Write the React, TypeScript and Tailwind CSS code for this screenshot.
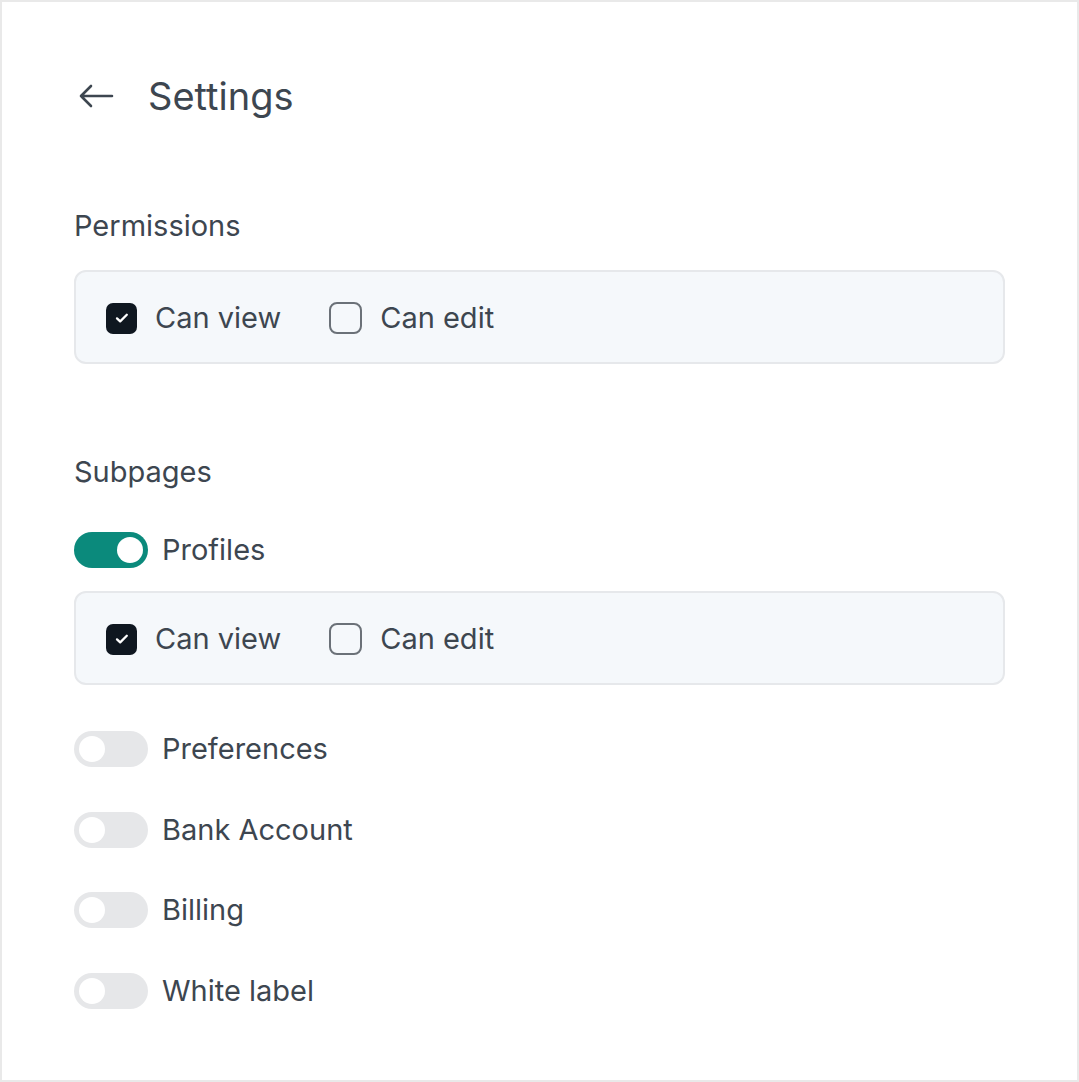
import { useState } from 'react';

type Perm = { view: boolean; edit: boolean };

function ArrowLeft() {
  return (
    <svg width="36" height="24" viewBox="0 0 36 24" fill="none" className="text-[#3d4650]">
      <path d="M34 12H3M13 2L3 12l10 10" stroke="currentColor" strokeWidth="2.6" strokeLinecap="round" strokeLinejoin="round" />
    </svg>
  );
}

function Checkbox({ checked, label, onChange }: { checked: boolean; label: string; onChange: () => void }) {
  return (
    <label className="flex items-center gap-[18px] cursor-pointer select-none" onClick={onChange}>
      {checked ? (
        <span className="flex h-[31px] w-[31px] items-center justify-center rounded-[7px] bg-[#0f1720]">
          <svg width="18" height="18" viewBox="0 0 18 18" fill="none">
            <path d="M4 9.4l3.2 3 6.6-6.6" stroke="white" strokeWidth="2.3" strokeLinecap="round" strokeLinejoin="round" />
          </svg>
        </span>
      ) : (
        <span className="h-[32px] w-[33px] rounded-[8px] border-[2.5px] border-[#6b7178] bg-transparent" />
      )}
      <span className="text-[29px] leading-[36px] text-[#3d4650]">{label}</span>
    </label>
  );
}

function PermissionBox({ value, onChange }: { value: Perm; onChange: (p: Perm) => void }) {
  return (
    <div className="flex h-[94px] items-center gap-[48px] rounded-[12px] border-2 border-[#e6e8eb] bg-[#f5f8fb] pl-[30px] pt-[2px]">
      <Checkbox checked={value.view} label="Can view" onChange={() => onChange({ ...value, view: !value.view })} />
      <Checkbox checked={value.edit} label="Can edit" onChange={() => onChange({ ...value, edit: !value.edit })} />
    </div>
  );
}

function Toggle({ on, label, onChange }: { on: boolean; label: string; onChange: () => void }) {
  return (
    <div className="flex items-center gap-[14px]">
      <button
        onClick={onChange}
        className={`flex h-[36px] w-[74px] items-center rounded-full px-[5px] ${on ? 'justify-end bg-[#0b8a7c]' : 'justify-start bg-[#e6e7e9]'}`}
      >
        <span className="h-[26px] w-[26px] rounded-full bg-white" />
      </button>
      <span className="text-[29px] leading-[36px] text-[#3d4650]">{label}</span>
    </div>
  );
}

export default function App() {
  const [perm, setPerm] = useState<Perm>({ view: true, edit: false });
  const [profilePerm, setProfilePerm] = useState<Perm>({ view: true, edit: false });
  const [pages, setPages] = useState<Record<string, boolean>>({
    Profiles: true,
    Preferences: false,
    'Bank Account': false,
    Billing: false,
    'White label': false,
  });

  const flip = (name: string) => setPages((p) => ({ ...p, [name]: !p[name] }));
  const rest = ['Preferences', 'Bank Account', 'Billing', 'White label'];

  return (
    <div className="h-[1082px] w-[1079px] border-2 border-[#e9e9e9] bg-white px-[72px] pt-[70px] font-['Inter',sans-serif]">
      {/* Header */}
      <div className="flex h-[48px] items-center">
        <span className="ml-[4px]"><ArrowLeft /></span>
        <h1 className="ml-[34px] text-[38px] leading-[48px] text-[#3d4650]">Settings</h1>
      </div>

      {/* Permissions */}
      <h2 className="mt-[88px] text-[29px] leading-[36px] text-[#3d4650]">Permissions</h2>
      <div className="mt-[26px]">
        <PermissionBox value={perm} onChange={setPerm} />
      </div>

      {/* Subpages */}
      <h2 className="mt-[90px] text-[29px] leading-[36px] text-[#3d4650]">Subpages</h2>
      <div className="mt-[42px]">
        <Toggle on={pages.Profiles} label="Profiles" onChange={() => flip('Profiles')} />
      </div>
      {pages.Profiles && (
        <div className="mt-[23px]">
          <PermissionBox value={profilePerm} onChange={setProfilePerm} />
        </div>
      )}
      <div className="mt-[46px] flex flex-col gap-[44.5px]">
        {rest.map((name) => (
          <Toggle key={name} on={pages[name]} label={name} onChange={() => flip(name)} />
        ))}
      </div>
    </div>
  );
}
